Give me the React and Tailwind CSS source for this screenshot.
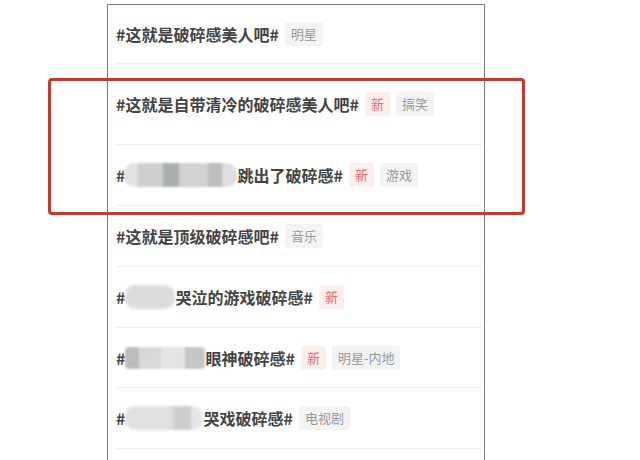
import React from 'react';

const rows = [
    { h: 'h-[59px]', pre: null, text: '这就是破碎感美人吧#', tags: ['明星'] },
    { h: 'h-[81px]', pre: null, text: '这就是自带清冷的破碎感美人吧#', isNew: true, tags: ['搞笑'] },
    { h: 'h-[61px]', pre: 'wide', text: '跳出了破碎感#', isNew: true, tags: ['游戏'] },
    { h: 'h-[61px]', pre: null, text: '这就是顶级破碎感吧#', tags: ['音乐'] },
    { h: 'h-[61px]', pre: 'short', text: '哭泣的游戏破碎感#', isNew: true, tags: [] },
    { h: 'h-[60px]', pre: 'mid', text: '眼神破碎感#', isNew: true, tags: ['明星-内地'] },
    { h: 'h-[61px]', pre: 'mid2', text: '哭戏破碎感#', tags: ['电视剧'] },
    { h: 'h-[61px]', pre: null, text: '', tags: [] },
];

// mosaic blocks covering part of the hashtag
const Blur = ({ kind }) => {
    if (kind === 'wide') {
        return (
            <span className="inline-flex h-[24px] w-[113px] -ml-[1px] rounded-[10px] overflow-hidden blur-[1.2px]">
                <span className="w-[14px] bg-[#e2e2e2]" />
                <span className="w-[25px] bg-[#cfcfcf]" />
                <span className="w-[16px] bg-[#a9b1ad]" />
                <span className="w-[29px] bg-[#d2d2d2]" />
                <span className="w-[14px] bg-[#bdbdbd]" />
                <span className="w-[15px] bg-[#dedede]" />
            </span>
        );
    }
    if (kind === 'short') {
        return <span className="inline-block h-[24px] w-[50px] rounded-[10px] bg-[#dcdcdc] blur-[1.5px]" />;
    }
    if (kind === 'mid') {
        return (
            <span className="inline-flex h-[22px] w-[80px] rounded-[4px] overflow-hidden blur-[1.2px]">
                <span className="w-[14px] bg-[#bcbcbc]" />
                <span className="w-[22px] bg-[#d8d8d8]" />
                <span className="w-[24px] bg-[#e4e4e4]" />
                <span className="w-[20px] bg-[#c6c6c6]" />
            </span>
        );
    }
    return (
        <span className="inline-flex h-[24px] w-[78px] rounded-[10px] overflow-hidden blur-[1.5px]">
            <span className="w-[48px] bg-[#e0e0e0]" />
            <span className="w-[18px] bg-[#cdcdcd]" />
            <span className="w-[12px] bg-[#e6e6e6]" />
        </span>
    );
};

const Tag = ({ children, red }) => (
    <span className={`ml-[6px] inline-flex items-center h-[24px] px-[6px] rounded-[3px] text-[13px] font-normal ${red ? 'bg-[#fdeeee] text-[#f26b6b]' : 'bg-[#f3f3f3] text-[#9a9a9a]'}`}>
        {children}
    </span>
);

export default function App() {
    return (
        <div className="relative w-[640px] h-[460px] bg-white overflow-hidden" style={{ fontFamily: '"Noto Sans CJK SC", "Noto Sans", sans-serif' }}>
            <div className="mt-[4px] ml-[107px] w-[378px] h-[460px] border-x border-t border-[#7a7a7a] flex flex-col">
                {rows.map((r, i) => (
                    <div key={i} className={`${r.h} shrink-0 pl-[8px] pr-[2px]`}>
                        <div className="h-full flex items-center border-b border-[#efefef]">
                            {r.text && (
                                <span className="inline-flex items-center text-[16px] font-bold text-[#444444] leading-none">
                                    #
                                    {r.pre && <Blur kind={r.pre} />}
                                    {r.text}
                                </span>
                            )}
                            {r.isNew && <Tag red>新</Tag>}
                            {r.tags.map(t => <Tag key={t}>{t}</Tag>)}
                        </div>
                    </div>
                ))}
            </div>
            {/* annotation box */}
            <div className="absolute left-[48px] top-[78px] w-[477px] h-[137px] border-[3px] border-[#c8362c] rounded-[4px]" />
        </div>
    );
}
